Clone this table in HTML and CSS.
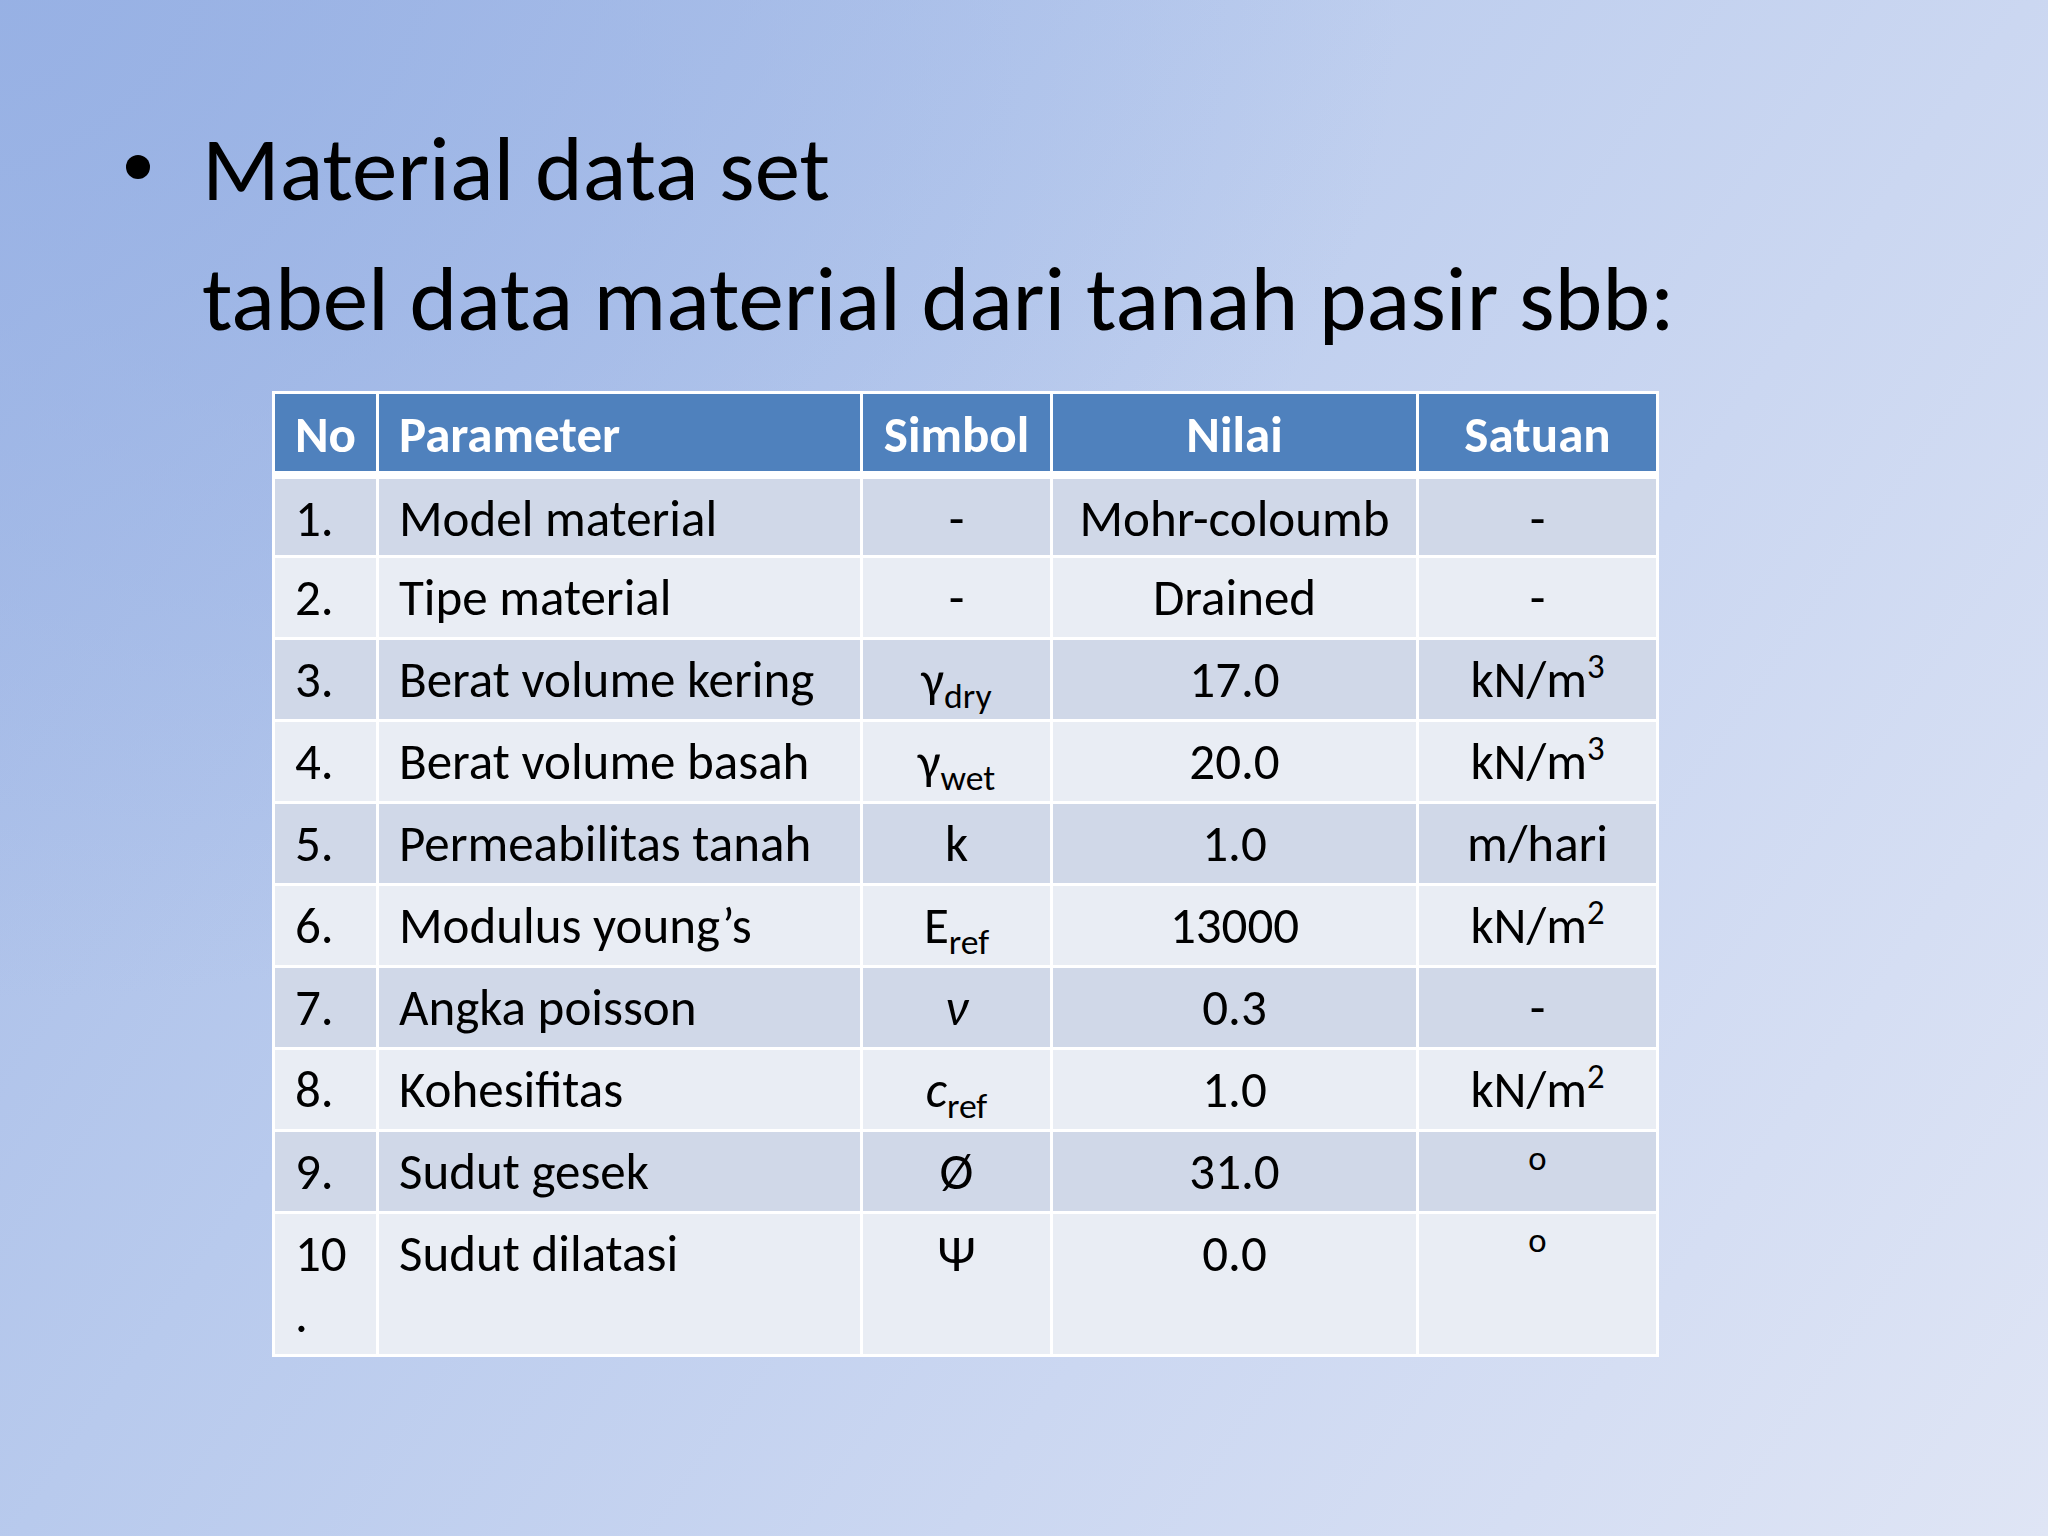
FILE: index.html
```html
<!DOCTYPE html>
<html lang="id">
<head>
<meta charset="utf-8">
<title>Material data set</title>
<link rel="stylesheet" href="styles.css">
</head>
<body>
<div class="slide">
  <ul class="points">
    <li class="point"><span class="bullet"></span><span>Material data set</span></li>
    <li class="point cont"><span>tabel data material dari tanah pasir sbb:</span></li>
  </ul>
  <table class="data">
    <colgroup>
      <col class="c-no"><col class="c-param"><col class="c-sym"><col class="c-val"><col class="c-unit">
    </colgroup>
    <thead>
      <tr><th class="left">No</th><th class="left">Parameter</th><th>Simbol</th><th>Nilai</th><th>Satuan</th></tr>
    </thead>
    <tbody>
      <tr class="odd"><td class="left">1.</td><td class="left">Model material</td><td>-</td><td>Mohr-coloumb</td><td>-</td></tr>
      <tr class="even"><td class="left">2.</td><td class="left">Tipe material</td><td>-</td><td>Drained</td><td>-</td></tr>
      <tr class="odd"><td class="left">3.</td><td class="left">Berat volume kering</td><td>γ<sub class="sub">dry</sub></td><td>17.0</td><td>kN/m<sup class="sup">3</sup></td></tr>
      <tr class="even"><td class="left">4.</td><td class="left">Berat volume basah</td><td>γ<sub class="sub">wet</sub></td><td>20.0</td><td>kN/m<sup class="sup">3</sup></td></tr>
      <tr class="odd"><td class="left">5.</td><td class="left">Permeabilitas tanah</td><td>k</td><td>1.0</td><td>m/hari</td></tr>
      <tr class="even"><td class="left">6.</td><td class="left">Modulus young’s</td><td>E<sub class="sub">ref</sub></td><td>13000</td><td>kN/m<sup class="sup">2</sup></td></tr>
      <tr class="odd"><td class="left">7.</td><td class="left">Angka poisson</td><td><i class="it">ν</i></td><td>0.3</td><td>-</td></tr>
      <tr class="even"><td class="left">8.</td><td class="left">Kohesifitas</td><td><i class="it">c</i><sub class="sub">ref</sub></td><td>1.0</td><td>kN/m<sup class="sup">2</sup></td></tr>
      <tr class="odd"><td class="left">9.</td><td class="left">Sudut gesek</td><td>Ø</td><td>31.0</td><td><sup class="sup">o</sup></td></tr>
      <tr class="even tall"><td class="left">10<br>.</td><td class="left">Sudut dilatasi</td><td>Ψ</td><td>0.0</td><td><sup class="sup">o</sup></td></tr>
    </tbody>
  </table>
</div>
</body>
</html>
```
FILE: styles.css
```css
html, body {
  margin: 0;
  padding: 0;
}

body {
  width: 2048px;
  height: 1536px;
  overflow: hidden;
  font-family: "Carlito", "Lato", "Liberation Sans", sans-serif;
  color: #000;
  background:
    radial-gradient(ellipse 1400px 1000px at 0% 0%, rgba(150, 176, 228, 0.9) 0%, rgba(150, 176, 228, 0) 100%),
    linear-gradient(125deg, #a3b9e6 0%, #b8caed 35%, #cbd7f1 65%, #dfe5f5 100%);
}

.slide {
  padding: 104px 0 0 126px;
}

.points {
  list-style: none;
  margin: 0;
  padding: 0;
  font-size: 91px;
  line-height: 130px;
}

.point {
  display: flex;
}

.bullet {
  flex: none;
  width: 76px;
  height: 130px;
  padding-top: 51px;
  box-sizing: border-box;
}

.bullet::before {
  content: "";
  display: block;
  width: 24px;
  height: 24px;
  border-radius: 50%;
  background: #000;
}

.cont {
  padding-left: 76px;
}

.data {
  margin: 27px 0 0 146px;
  width: 1384px;
  table-layout: fixed;
  border-collapse: collapse;
  border: 3px solid #fff;
  font-size: 51px;
  line-height: 61px;
}

.c-no { width: 104px; }
.c-param { width: 484px; }
.c-sym { width: 190px; }
.c-val { width: 366px; }
.c-unit { width: 240px; }

.data th,
.data td {
  border: 3px solid #fff;
  padding: 9px 20px 0;
  vertical-align: top;
  text-align: center;
}

.data .left {
  text-align: left;
}

.data thead tr {
  height: 82px;
}

.data th {
  background: #4f81bd;
  color: #fff;
  font-weight: bold;
  border-bottom-width: 8px;
  padding-top: 10px;
}

.data tbody tr {
  height: 82px;
}

.data tbody tr.tall {
  height: 143px;
}

.odd td {
  background: #d0d8e8;
}

.even td {
  background: #e9edf4;
}

.sub {
  font-size: 0.7em;
  line-height: 1;
  vertical-align: -0.3em;
}

.sup {
  font-size: 0.68em;
  line-height: 1;
  vertical-align: 0.55em;
}

.it {
  font-style: italic;
}
```
